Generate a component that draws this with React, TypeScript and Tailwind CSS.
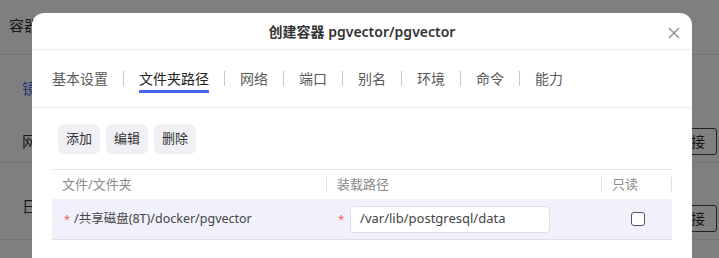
const font = { fontFamily: '"Noto Sans", "Noto Sans CJK SC", sans-serif' };

const tabs = ["基本设置", "文件夹路径", "网络", "端口", "别名", "环境", "命令", "能力"];

function CloseIcon() {
  return (
    <svg width="12" height="12" viewBox="0 0 12 12" fill="none" stroke="#9a9a9a" strokeWidth="1.6">
      <path d="M1 1L11 11M11 1L1 11" />
    </svg>
  );
}

function BackgroundPage() {
  return (
    <div className="flex h-full w-full flex-col bg-white text-[#333]">
      <div className="flex h-[55px] items-center border-b border-[#e8e8e8] px-[9px] pb-[4px] text-[15px]">
        容器详情
      </div>
      <div className="flex h-[66px] items-center px-[22px] text-[15px] text-[#4a66e8]">镜像</div>
      <div className="flex h-[42px] items-center justify-between border-b border-[#e8e8e8] pl-[22px] pr-[2px] text-[15px]">
        <span>网络</span>
        <span className="flex h-[27px] w-[52px] items-center justify-center rounded-[3px] border border-[#444] text-[14px]">
          连接
        </span>
      </div>
      <div className="flex h-[77px] items-start justify-between border-b border-[#e8e8e8] pl-[22px] pr-[2px] pt-[32px] text-[15px]">
        <span>日志</span>
        <span className="mt-[10px] flex h-[27px] w-[52px] items-center justify-center rounded-[3px] border border-[#444] text-[14px]">
          连接
        </span>
      </div>
    </div>
  );
}

export default function App() {
  return (
    <div className="relative h-[258px] w-[719px] overflow-hidden" style={font}>
      <BackgroundPage />
      <div className="absolute inset-0 bg-black/50" />

      <div className="absolute left-[32px] top-[13px] h-[270px] w-[660px] rounded-xl bg-white">
        {/* Header */}
        <div className="relative flex h-[37px] items-center justify-center border-b border-[#ebebeb]">
          <span className="text-[14px] font-semibold text-[#333]">创建容器 pgvector/pgvector</span>
          <button className="absolute right-[12px] top-[14px]">
            <CloseIcon />
          </button>
        </div>

        {/* Tabs */}
        <div className="flex h-[58px] items-center border-b border-[#ebebeb] px-5">
          {tabs.map((t, i) => (
            <div key={t} className="flex items-center">
              {i > 0 && <div className="mx-[15px] h-[15px] w-px bg-[#c8c8c8]" />}
              <span
                className={
                  i === 1
                    ? "border-b-[3px] border-[#4563e8] pb-px pt-[4px] text-[14px] leading-5 text-[#222]"
                    : "border-b-[3px] border-transparent pb-px pt-[4px] text-[14px] leading-5 text-[#5a5a5a]"
                }
              >
                {t}
              </span>
            </div>
          ))}
        </div>

        {/* Content */}
        <div className="px-5 pt-4">
          <div className="ml-[6px] flex gap-[6px]">
            {["添加", "编辑", "删除"].map((b) => (
              <button
                key={b}
                className="h-[30px] rounded-md bg-[#f0f1f5] px-[8px] text-[13px] text-[#333]"
              >
                {b}
              </button>
            ))}
          </div>

          <div className="mt-[15px] w-[620px] border-t border-[#e6e6e6]">
            <div className="grid h-[29px] grid-cols-[275px_275px_70px] items-center text-[13px] text-[#8a8a8a]">
              <div className="flex items-center justify-between pl-[10px]">
                <span>文件/文件夹</span>
                <div className="h-[16px] w-px bg-[#e2e2e2]" />
              </div>
              <div className="flex items-center justify-between pl-[10px]">
                <span>装载路径</span>
                <div className="h-[16px] w-px bg-[#e2e2e2]" />
              </div>
              <div className="flex items-center justify-between pl-[10px]">
                <span>只读</span>
                <div className="h-[16px] w-px bg-[#e2e2e2]" />
              </div>
            </div>

            <div className="grid h-[41px] grid-cols-[275px_275px_70px] items-center border-b border-[#e0e0e0] bg-[#f0f1fa] text-[13px] text-[#444]">
              <div className="flex items-center pl-[12px]">
                <span className="mr-[4px] text-[11px] text-[#ec5a60]">*</span>
                <span className="text-[12.5px]">/共享磁盘(8T)/docker/pgvector</span>
              </div>
              <div className="flex items-center pl-[11px]">
                <span className="mr-[6px] text-[11px] text-[#ec5a60]">*</span>
                <div className="flex h-[27px] w-[200px] items-center rounded-[4px] border border-[#dcdfe6] bg-white px-[9px]">
                  /var/lib/postgresql/data
                </div>
              </div>
              <div className="flex items-center justify-center pl-[2px]">
                <div className="h-[14px] w-[14px] rounded-[3px] border border-[#555] bg-white" />
              </div>
            </div>
          </div>
        </div>
      </div>
    </div>
  );
}
